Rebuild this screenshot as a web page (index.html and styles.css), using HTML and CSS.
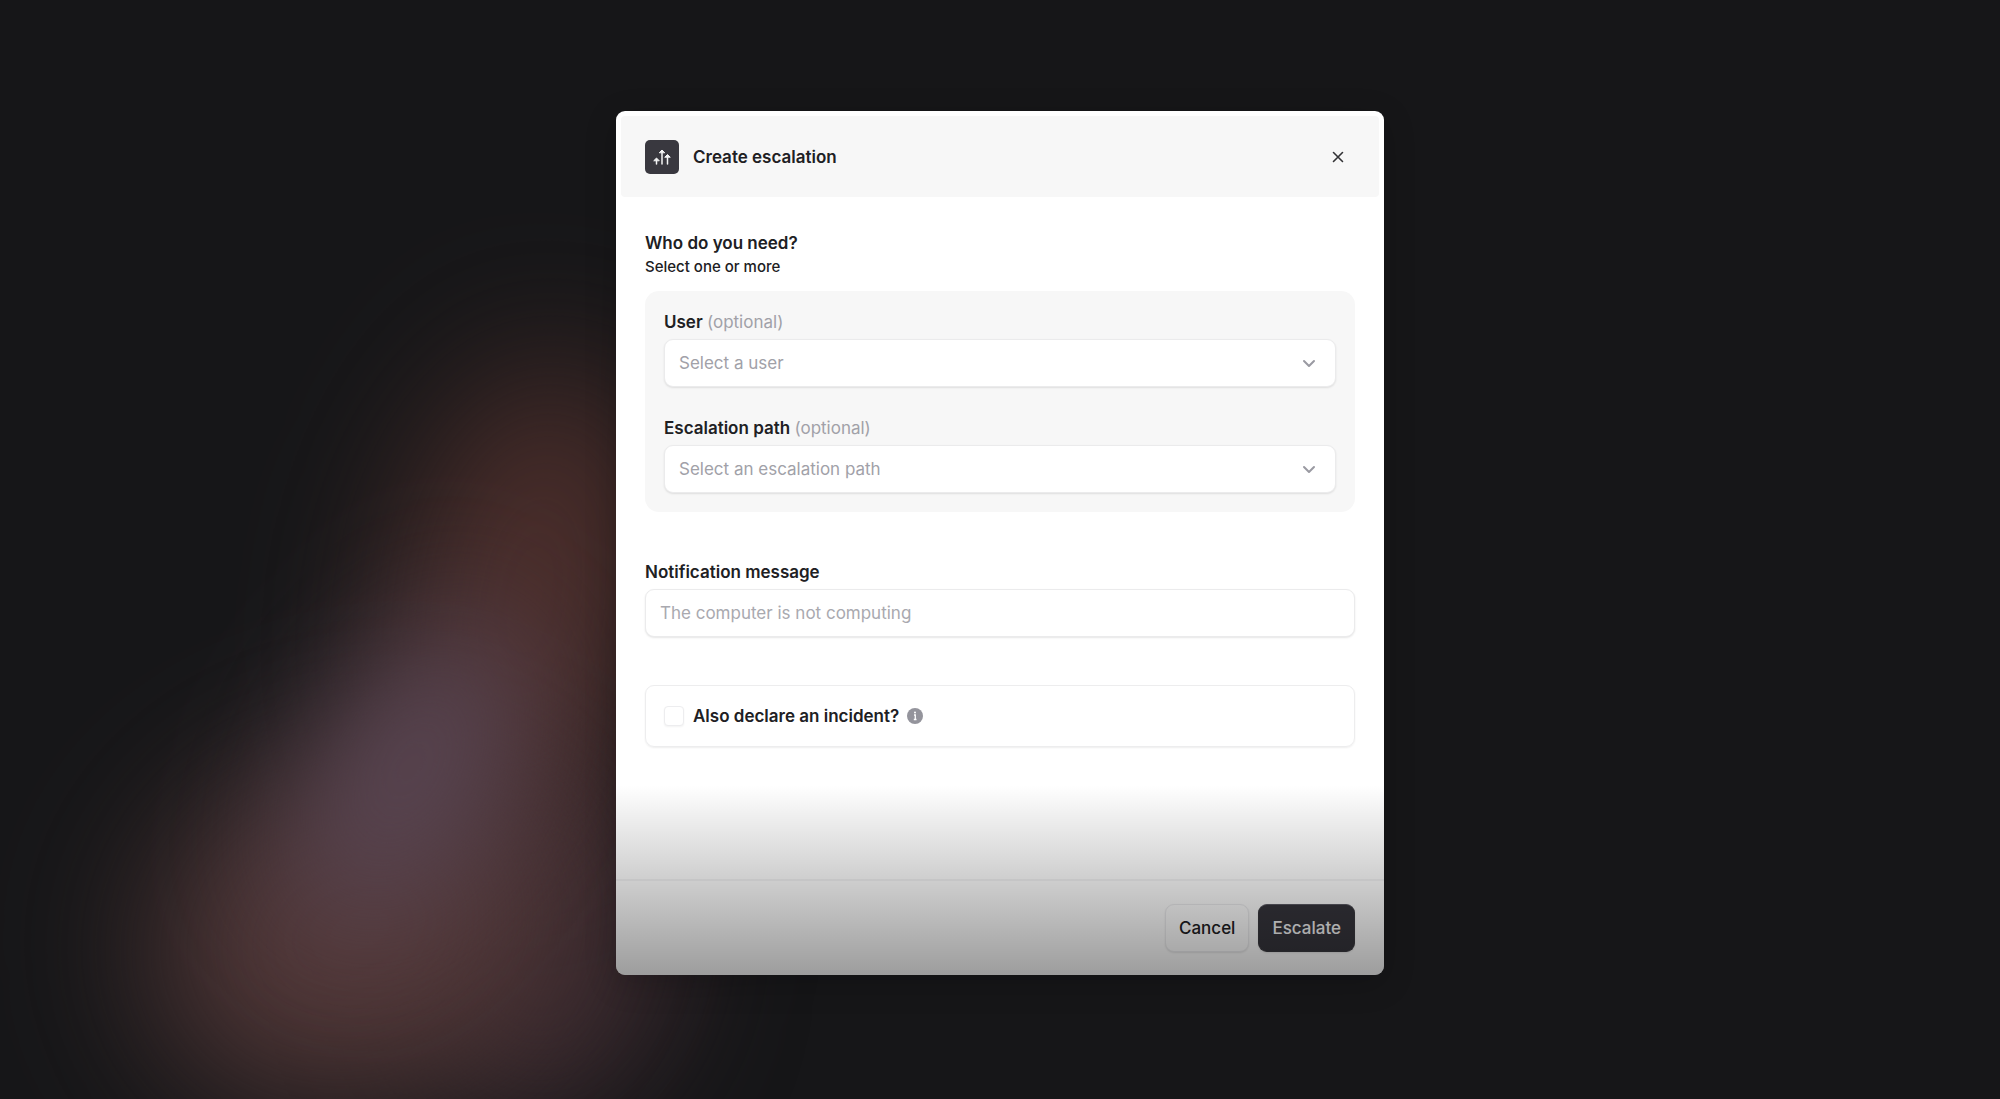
FILE: index.html
```html
<!DOCTYPE html>
<html lang="en">
<head>
<meta charset="utf-8">
<meta name="viewport" content="width=device-width, initial-scale=1">
<title>Create escalation</title>
<link rel="stylesheet" href="styles.css">
</head>
<body>
<div class="glow" aria-hidden="true">
  <span class="blob blob-plum"></span>
  <span class="blob blob-red"></span>
  <span class="blob blob-brown"></span>
  <span class="blob blob-purple"></span>
</div>
<main class="stage">
  <form class="modal" role="dialog" aria-labelledby="modal-title">
    <header class="modal-header">
      <span class="tile">
        <svg width="18" height="18" viewBox="0 0 18 18" fill="none" stroke="#f4f4f5" stroke-width="1.500" stroke-linecap="round" stroke-linejoin="round">
          <path d="M3.500 16V11.500M9 16V3M14.500 16V8"/>
          <path d="M1 12.500L3.500 10L6 12.500ZM6.500 4.500L9 2L11.500 4.500ZM12 9L14.500 6.500L17 9Z" fill="#f4f4f5" stroke-width="1"/>
        </svg>
      </span>
      <h1 class="title" id="modal-title">Create escalation</h1>
      <button class="close" type="button" aria-label="Close">
        <svg width="12" height="12" viewBox="0 0 12 12" fill="none" stroke="#333336" stroke-width="1.600" stroke-linecap="round"><path d="M1.500 1.500L10.500 10.500M10.500 1.500L1.500 10.500"/></svg>
      </button>
    </header>

    <div class="modal-body">
      <section>
        <h2 class="heading">Who do you need?</h2>
        <p class="hint">Select one or more</p>
        <div class="panel">
          <div class="field">
            <label class="label" for="user">User <span class="optional">(optional)</span></label>
            <div class="select-wrap">
              <select class="control" id="user"><option>Select a user</option></select>
              <svg class="chevron" width="14" height="14" viewBox="0 0 14 14" fill="none" stroke="#9a9aa2" stroke-width="2" stroke-linecap="round" stroke-linejoin="round"><path d="M2 5L7 10L12 5"/></svg>
            </div>
          </div>
          <div class="field">
            <label class="label" for="path">Escalation path <span class="optional">(optional)</span></label>
            <div class="select-wrap">
              <select class="control" id="path"><option>Select an escalation path</option></select>
              <svg class="chevron" width="14" height="14" viewBox="0 0 14 14" fill="none" stroke="#9a9aa2" stroke-width="2" stroke-linecap="round" stroke-linejoin="round"><path d="M2 5L7 10L12 5"/></svg>
            </div>
          </div>
        </div>
      </section>

      <div class="field">
        <label class="label" for="message">Notification message</label>
        <input class="control" id="message" type="text" placeholder="The computer is not computing">
      </div>

      <div class="check-card">
        <input class="checkbox" id="declare" type="checkbox">
        <label class="label" for="declare">Also declare an incident?</label>
        <svg class="info" width="16" height="16" viewBox="0 0 16 16"><circle cx="8" cy="8" r="8" fill="#94949c"/><circle cx="8" cy="4.500" r="1" fill="#fff"/><path d="M7 7H8.300V11.500M6.800 11.500H9.500" fill="none" stroke="#fff" stroke-width="1.300"/></svg>
      </div>
    </div>

    <footer class="modal-footer">
      <button class="button" type="button">Cancel</button>
      <button class="button primary" type="submit">Escalate</button>
    </footer>
  </form>
</main>
</body>
</html>
```

FILE: styles.css
```css
* {
  box-sizing: border-box;
}

body {
  margin: 0;
  min-height: 100vh;
  background: #161618;
  color: #202023;
  font: 400 17px/24px Inter, "Liberation Sans", sans-serif;
}

h1, h2, p {
  margin: 0;
}

/* Soft coloured light behind the dialog */
.glow {
  position: absolute;
  inset: 0;
  overflow: hidden;
}

.blob {
  position: absolute;
  border-radius: 50%;
}

.blob-plum {
  top: 740px;
  left: 400px;
  width: 280px;
  height: 380px;
  background: #34262b;
  filter: blur(60px);
}

.blob-red {
  top: 360px;
  left: 400px;
  width: 260px;
  height: 480px;
  background: #4c2e2b;
  filter: blur(75px);
  transform: rotate(10deg);
}

.blob-brown {
  top: 760px;
  left: 150px;
  width: 420px;
  height: 340px;
  background: #513737;
  filter: blur(75px);
  transform: rotate(-20deg);
}

.blob-purple {
  top: 600px;
  left: 320px;
  width: 180px;
  height: 340px;
  background: #5a4653;
  filter: blur(65px);
  transform: rotate(30deg);
}

.stage {
  position: relative;
  display: flex;
  justify-content: center;
  padding: 111px 24px 24px;
}

.modal {
  position: relative;
  width: 100%;
  max-width: 768px;
  overflow: hidden;
  border-radius: 9px;
  background: #fff;
  box-shadow: 0 8px 32px #00000033;
}

/* Fade to dark over the lower part of the dialog */
.modal::after {
  content: "";
  position: absolute;
  inset: auto 0 0;
  height: 190px;
  background: linear-gradient(#0000, #00000062);
  pointer-events: none;
}

.modal-header {
  display: flex;
  align-items: center;
  gap: 14px;
  margin: 5px 5px 0;
  padding: 24px 24px 23px;
  border-radius: 4px;
  background: #f7f7f7;
}

.tile {
  display: grid;
  place-items: center;
  width: 34px;
  height: 34px;
  border-radius: 5px;
  background: #39383f;
}

.title, .heading, .label {
  font-size: 17px;
  font-weight: 600;
  line-height: 24px;
}

.close {
  display: grid;
  place-items: center;
  width: 34px;
  height: 34px;
  margin-left: auto;
  padding: 0;
  border: 0;
  background: none;
}

.modal-body {
  display: flex;
  flex-direction: column;
  gap: 48px;
  padding: 34px 29px 132px;
}

.hint {
  font-size: 15px;
  font-weight: 500;
}

.panel {
  display: flex;
  flex-direction: column;
  gap: 29px;
  margin-top: 12px;
  padding: 19px;
  border-radius: 14px;
  background: #f7f7f7;
}

.field {
  display: flex;
  flex-direction: column;
  gap: 5px;
}

.optional {
  color: #a1a1a8;
  font-weight: 400;
}

.select-wrap {
  position: relative;
}

.control {
  display: block;
  width: 100%;
  height: 48px;
  padding: 0 14px;
  border: 1px solid #ebebec;
  border-radius: 9px;
  background: #fff;
  box-shadow: 0 1px 2px #0000001a;
  color: #a1a1a8;
  font: inherit;
  appearance: none;
}

.control::placeholder {
  color: #a9a9af;
}

.chevron {
  position: absolute;
  top: 17px;
  right: 20px;
  pointer-events: none;
}

.check-card {
  display: flex;
  align-items: center;
  padding: 18px;
  border: 1px solid #ededee;
  border-radius: 9px;
  box-shadow: 0 1px 2px #00000012;
}

.checkbox {
  width: 20px;
  height: 20px;
  margin: 0 9px 0 0;
  border: 1px solid #ededef;
  border-radius: 4px;
  background: #fff;
  box-shadow: 0 1px 2px #0000000d;
  appearance: none;
}

.info {
  margin-left: 8px;
}

.modal-footer {
  display: flex;
  justify-content: flex-end;
  gap: 9px;
  padding: 23px 29px;
  border-top: 2px solid #f4f4f5;
}

.button {
  height: 48px;
  padding: 0 13px;
  border: 1px solid #ededef;
  border-radius: 9px;
  background: #fff;
  box-shadow: 0 1px 2px #0000001a;
  color: inherit;
  font: inherit;
  font-weight: 500;
}

.primary {
  border-color: #3a393f;
  border-top-color: #5c5b64;
  background: #36353c;
  color: #f4f4f5;
}
```
